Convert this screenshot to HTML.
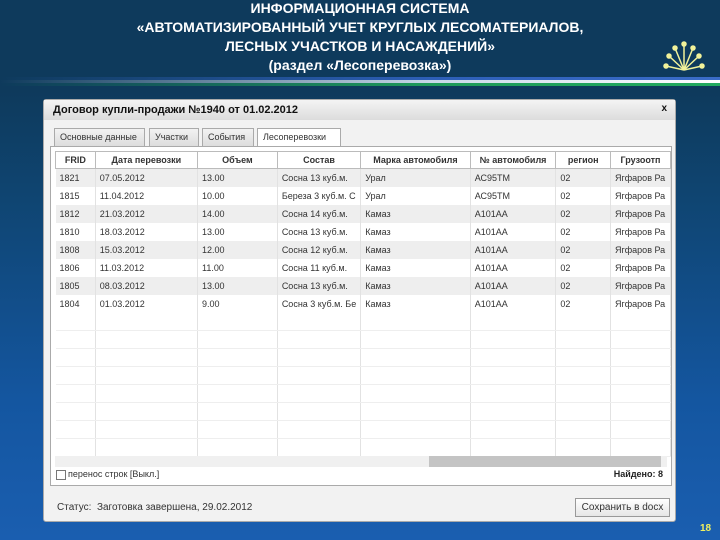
<!DOCTYPE html>
<html><head><meta charset="utf-8"><style>
*{margin:0;padding:0;box-sizing:border-box}
body{width:720px;height:540px;overflow:hidden;position:relative;font-family:"Liberation Sans",sans-serif;
background:linear-gradient(#0e3a5c 0,#0e3a5c 90px,#0f4572 200px,#1456a0 400px,#1a5eb0 540px)}
.t{position:absolute;left:0;width:720px;text-align:center;color:#fff;font-weight:bold;font-size:14px;line-height:19px;top:-1px}
.st{position:absolute;left:0;width:720px;height:3px}
.win{position:absolute;left:43px;top:99px;width:633px;height:423px;background:#f2f2f2;border:1px solid #aaa;border-radius:3px}
.tb{height:20px;background:linear-gradient(#f4f4f4,#dcdcdc);font-size:11px;font-weight:bold;padding:4px 0 0 9px;color:#111;position:relative}
.x{position:absolute;right:8px;top:3px;font-size:10px}
.tab{position:absolute;top:28px;height:18px;border:1px solid #aaa;border-bottom:none;background:linear-gradient(#f2f2f2,#ddd);font-size:9px;padding:3px 5px 0;color:#333;white-space:nowrap;overflow:hidden}
.panel{position:absolute;left:6px;top:46px;width:622px;height:340px;border:1px solid #aaa;background:#fff}
table{border-collapse:collapse;position:absolute;left:4px;top:4px;font-size:9px;color:#333;table-layout:fixed}
td,th{border-right:1px solid #e2e2e2;height:18px;padding:0 4px;white-space:nowrap;overflow:hidden}
th{border:1px solid #bbb;background:#fff;height:17px;text-align:center;font-weight:bold}
tr:nth-child(even) td{background:#eee}
tr.e td{background:#fff!important;border-bottom:1px solid #eee}
</style></head><body>
<div class="t">ИНФОРМАЦИОННАЯ СИСТЕМА<br>«АВТОМАТИЗИРОВАННЫЙ УЧЕТ КРУГЛЫХ ЛЕСОМАТЕРИАЛОВ,<br>ЛЕСНЫХ УЧАСТКОВ И НАСАЖДЕНИЙ»<br>(раздел «Лесоперевозка»)</div>
<div class="st" style="top:77px;background:linear-gradient(90deg,#0e3a5c,#2d5fb8 60%,#3a6cc8)"></div>
<div class="st" style="top:80px;background:linear-gradient(90deg,#0e3a5c,#c8d8e8 60%,#fff)"></div>
<div class="st" style="top:83px;background:linear-gradient(90deg,#0e3a5c,#1e9a5a 60%,#22aa60)"></div>
<svg style="position:absolute;left:660px;top:40px" width="50" height="35" viewBox="0 0 50 35" stroke="#f2f29a" fill="#f2f29a" stroke-width="1.5">
<g><line x1="24" y1="30" x2="6" y2="26"/><line x1="24" y1="30" x2="9" y2="16"/><line x1="24" y1="30" x2="15" y2="8"/><line x1="24" y1="30" x2="24" y2="4"/><line x1="24" y1="30" x2="33" y2="8"/><line x1="24" y1="30" x2="39" y2="16"/><line x1="24" y1="30" x2="42" y2="26"/>
<circle cx="6" cy="26" r="2"/><circle cx="9" cy="16" r="2"/><circle cx="15" cy="8" r="2"/><circle cx="24" cy="4" r="2"/><circle cx="33" cy="8" r="2"/><circle cx="39" cy="16" r="2"/><circle cx="42" cy="26" r="2"/></g></svg>
<div class="win">
<div class="tb">Договор купли-продажи №1940 от 01.02.2012<span class="x">x</span></div>
<div class="tab" style="left:10px;width:91px">Основные данные</div>
<div class="tab" style="left:105px;width:50px">Участки</div>
<div class="tab" style="left:158px;width:52px">События</div>
<div class="tab" style="left:213px;width:84px;background:#fff;height:19px">Лесоперевозки</div>
<div class="panel">
<table>
<colgroup><col style="width:40px"><col style="width:103px"><col style="width:81px"><col style="width:78px"><col style="width:110px"><col style="width:86px"><col style="width:55px"><col style="width:60px"></colgroup>
<tr><th>FRID</th><th>Дата перевозки</th><th>Объем</th><th>Состав</th><th>Марка автомобиля</th><th>№ автомобиля</th><th>регион</th><th>Грузоотп</th></tr>
<tr><td>1821</td><td>07.05.2012</td><td>13.00</td><td>Сосна 13 куб.м.</td><td>Урал</td><td>АС95ТМ</td><td>02</td><td>Ягфаров Ра</td></tr>
<tr><td>1815</td><td>11.04.2012</td><td>10.00</td><td>Береза 3 куб.м. С</td><td>Урал</td><td>АС95ТМ</td><td>02</td><td>Ягфаров Ра</td></tr>
<tr><td>1812</td><td>21.03.2012</td><td>14.00</td><td>Сосна 14 куб.м.</td><td>Камаз</td><td>А101АА</td><td>02</td><td>Ягфаров Ра</td></tr>
<tr><td>1810</td><td>18.03.2012</td><td>13.00</td><td>Сосна 13 куб.м.</td><td>Камаз</td><td>А101АА</td><td>02</td><td>Ягфаров Ра</td></tr>
<tr><td>1808</td><td>15.03.2012</td><td>12.00</td><td>Сосна 12 куб.м.</td><td>Камаз</td><td>А101АА</td><td>02</td><td>Ягфаров Ра</td></tr>
<tr><td>1806</td><td>11.03.2012</td><td>11.00</td><td>Сосна 11 куб.м.</td><td>Камаз</td><td>А101АА</td><td>02</td><td>Ягфаров Ра</td></tr>
<tr><td>1805</td><td>08.03.2012</td><td>13.00</td><td>Сосна 13 куб.м.</td><td>Камаз</td><td>А101АА</td><td>02</td><td>Ягфаров Ра</td></tr>
<tr><td>1804</td><td>01.03.2012</td><td>9.00</td><td>Сосна 3 куб.м. Бе</td><td>Камаз</td><td>А101АА</td><td>02</td><td>Ягфаров Ра</td></tr>
<tr class="e"><td></td><td></td><td></td><td></td><td></td><td></td><td></td><td></td></tr>
<tr class="e"><td></td><td></td><td></td><td></td><td></td><td></td><td></td><td></td></tr>
<tr class="e"><td></td><td></td><td></td><td></td><td></td><td></td><td></td><td></td></tr>
<tr class="e"><td></td><td></td><td></td><td></td><td></td><td></td><td></td><td></td></tr>
<tr class="e"><td></td><td></td><td></td><td></td><td></td><td></td><td></td><td></td></tr>
<tr class="e"><td></td><td></td><td></td><td></td><td></td><td></td><td></td><td></td></tr>
<tr class="e"><td></td><td></td><td></td><td></td><td></td><td></td><td></td><td></td></tr>
<tr class="e"><td></td><td></td><td></td><td></td><td></td><td></td><td></td><td></td></tr>
</table>
<div style="position:absolute;left:4px;top:309px;width:612px;height:11px;background:#f0f0f0"><div style="position:absolute;left:374px;top:0;width:232px;height:11px;background:#c4c4c4"></div></div>
<div style="position:absolute;left:5px;top:323px;width:10px;height:10px;border:1px solid #777;background:#fff"></div>
<div style="position:absolute;left:17px;top:322px;font-size:9px;color:#333">перенос строк [Выкл.]</div>
<div style="position:absolute;right:8px;top:322px;font-size:9px;color:#222;font-weight:bold">Найдено: 8</div>
</div>
<div style="position:absolute;left:13px;top:402px;font-size:10px;color:#333">Статус:&nbsp; Заготовка завершена, 29.02.2012</div>
<div style="position:absolute;left:531px;top:398px;width:95px;height:19px;border:1px solid #999;background:linear-gradient(#fff,#e6e6e6);font-size:10px;color:#333;text-align:center;padding-top:3px">Сохранить в docx</div>
</div>
<div style="position:absolute;left:700px;top:523px;color:#f0f060;font-size:10px;font-weight:bold">18</div>
</body></html>
